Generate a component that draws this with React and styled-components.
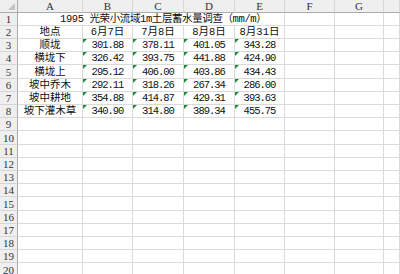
import React from "react";
import styled, { createGlobalStyle } from "styled-components";

const GlobalStyle = createGlobalStyle`
    html, body {
        margin: 0;
        padding: 0;
        background: #ffffff;
        overflow: hidden;
    }
`;

const COLS = ["A", "B", "C", "D", "E", "F", "G", ""];
const COL_WIDTHS = [65, 50, 51, 51, 50, 50, 49];
const ROW_COUNT = 20;
const rowHeight = (i) => (i % 5 === 4 ? 14 : 13);

const dates = ["6月7日", "7月8日", "8月8日", "8月31日"];

const data = [
    ["顺垅", "301.88", "378.11", "401.05", "343.28"],
    ["横垅下", "326.42", "393.75", "441.88", "424.90"],
    ["横垅上", "295.12", "406.00", "403.86", "434.43"],
    ["坡中乔木", "292.11", "318.26", "267.34", "286.00"],
    ["坡中耕地", "354.88", "414.87", "429.31", "393.63"],
    ["坡下灌木草", "340.90", "314.80", "389.34", "455.75"],
];

export default function App() {
    const rows = [];
    for (let r = 1; r <= ROW_COUNT; r++) {
        const cells = [];
        if (r === 1) {
            cells.push(
                <TitleCell key="t">1995 光荣小流域1m土层蓄水量调查（mm/m）</TitleCell>
            );
            for (let c = 5; c < COLS.length; c++) cells.push(<Cell key={c} />);
        } else if (r === 2) {
            cells.push(<Cell key={0} center>地点</Cell>);
            dates.forEach((d, i) => cells.push(<Cell key={i + 1} center>{d}</Cell>));
            for (let c = 5; c < COLS.length; c++) cells.push(<Cell key={c} />);
        } else if (r - 3 < data.length) {
            const row = data[r - 3];
            cells.push(<Cell key={0} center>{row[0]}</Cell>);
            row.slice(1).forEach((v, i) => (
                cells.push(
                    <Cell key={i + 1} center>
                        <Flag />
                        <Num>{v}</Num>
                    </Cell>
                )
            ));
            for (let c = 5; c < COLS.length; c++) cells.push(<Cell key={c} />);
        } else {
            for (let c = 0; c < COLS.length; c++) cells.push(<Cell key={c} />);
        }
        rows.push(
            <React.Fragment key={r}>
                <RowHead>{r}</RowHead>
                {cells}
            </React.Fragment>
        );
    }

    return (
        <>
            <GlobalStyle />
            <Sheet>
                <Corner>
                    <CornerMark />
                </Corner>
                {COLS.map((c, i) => (
                    <ColHead key={i}>{c}</ColHead>
                ))}
                {rows}
            </Sheet>
        </>
    );
}

const Sheet = styled.div`
    display: grid;
    grid-template-columns: 18px ${COL_WIDTHS.map((w) => w + "px").join(" ")} 1fr;
    grid-template-rows: 13px ${Array.from({ length: ROW_COUNT }, (_, i) => rowHeight(i) + "px").join(" ")};
    width: 400px;
    height: 274px;
    overflow: hidden;
    font-family: "Liberation Mono", "Noto Sans CJK SC", monospace;
    font-size: 10.5px;
    color: #111111;
`;

const Head = styled.div`
    box-sizing: border-box;
    display: flex;
    align-items: flex-end;
    justify-content: center;
    background: #efefef;
    color: #333333;
    font-family: "Liberation Serif", "Noto Sans CJK SC", serif;
    font-size: 11px;
    line-height: 12px;
`;

const Corner = styled(Head)`
    position: relative;
    border-right: 1px solid #ababab;
    border-bottom: 1px solid #ababab;
`;

const CornerMark = styled.div`
    position: absolute;
    right: 2px;
    bottom: 2px;
    width: 0;
    height: 0;
    border-left: 7px solid transparent;
    border-bottom: 7px solid #c4c4c4;
`;

const ColHead = styled(Head)`
    border-right: 1px solid #d6d6d6;
    border-bottom: 1px solid #ababab;
`;

const RowHead = styled(Head)`
    border-right: 1px solid #ababab;
    border-bottom: 1px solid #d6d6d6;
`;

const Cell = styled.div`
    position: relative;
    box-sizing: border-box;
    display: flex;
    align-items: flex-end;
    justify-content: ${(p) => (p.center ? "center" : "flex-start")};
    border-right: 1px solid #dadada;
    border-bottom: 1px solid #dadada;
    line-height: 12px;
    white-space: nowrap;
    overflow: visible;
`;

const TitleCell = styled(Cell)`
    grid-column: span 5;
    padding-left: 42px;
    letter-spacing: -0.4px;
`;

const Num = styled.span`
    letter-spacing: -1px;
`;

const Flag = styled.span`
    position: absolute;
    top: 0;
    left: 0;
    width: 0;
    height: 0;
    border-top: 4px solid #1f8a3b;
    border-right: 4px solid transparent;
`;
